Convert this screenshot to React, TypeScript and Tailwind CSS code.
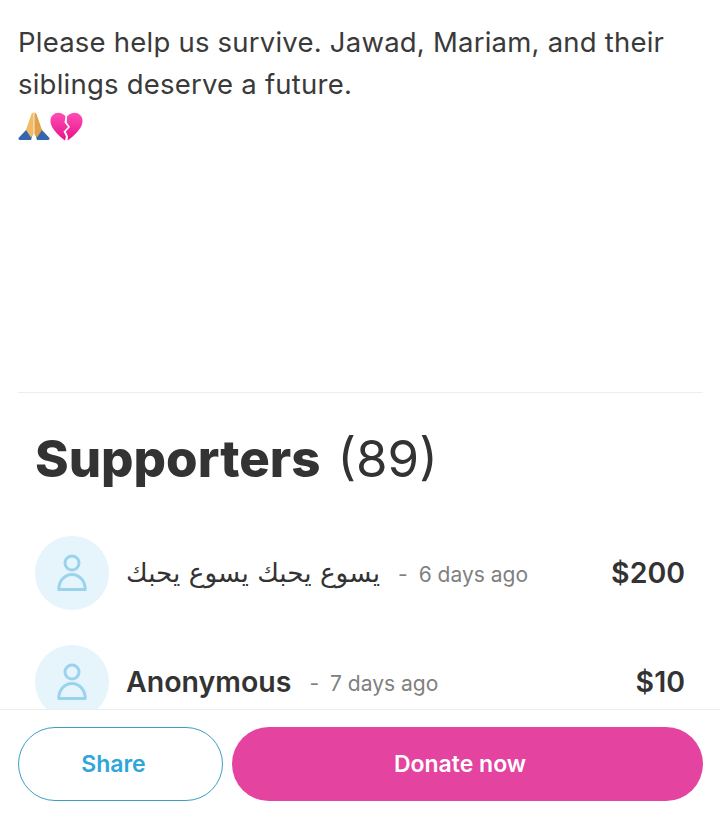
const Person = () => (
  <svg width="30" height="38" viewBox="0 0 30 38" fill="none" stroke="#9bd3ee" strokeWidth="3">
    <circle cx="15" cy="9" r="7" />
    <path d="M1.8 35.5 C1.8 27 7.5 20.5 15 20.5 C22.5 20.5 28.2 27 28.2 35.5 Z" strokeLinejoin="round" />
  </svg>
);

const Pray = () => (
  <svg width="32" height="28" viewBox="0 0 32 28">
    <path d="M9 17 L0.5 26 Q0 28 2 28 L13 28 L14.5 23 Z" fill="#3566ad" />
    <path d="M23 17 L31.5 26 Q32 28 30 28 L19 28 L17.5 23 Z" fill="#3566ad" />
    <path d="M15.6 0.5 Q13.6 0.5 12.8 4 L8 18 L13 25.5 L15.6 22 Z" fill="#f1bb66" />
    <path d="M16.4 0.5 Q18.4 0.5 19.2 4 L24 18 L19 25.5 L16.4 22 Z" fill="#e2a04a" />
  </svg>
);

const Broken = () => (
  <svg width="33" height="29" viewBox="0 0 33 29">
    <defs>
      <linearGradient id="heart" x1="0" y1="0" x2="0" y2="1">
        <stop offset="0" stopColor="#ff4fb4" />
        <stop offset="1" stopColor="#e8118c" />
      </linearGradient>
    </defs>
    <path d="M15.5 4.5 C13 0.8 8.5 0 5.5 1.2 C1.5 3 0 6.5 0.6 10.5 C1.5 17 9 24 15 28.5 L16 24.5 L13.5 19.5 L18 15 L14.5 10.5 Z" fill="url(#heart)" />
    <path d="M17 4.5 C20 0.8 24.5 0 27.5 1.2 C31.5 3 33 6.5 32.4 10.5 C31.5 17 24 24 17.5 28.5 L18 24.5 L15.8 19.5 L20 15 L16.8 10.5 Z" fill="url(#heart)" />
  </svg>
);

const Row = ({ name, time, amount, arabic }: { name: string; time: string; amount: string; arabic?: boolean }) => (
  <div className="flex items-center h-[74px]">
    <div className="w-[74px] h-[74px] shrink-0 rounded-full bg-[#e6f4fb] flex items-center justify-center">
      <Person />
    </div>
    <div className="ml-[17px] flex-1 flex items-center min-w-0">
      {arabic ? (
        <span dir="rtl" className="text-[26.3px] text-[#333333] font-normal leading-none font-['DejaVu_Sans',sans-serif]">{name}</span>
      ) : (
        <span className="text-[28.5px] text-[#333333] font-semibold leading-none">{name}</span>
      )}
      <span className="ml-[18px] pt-[4px] text-[21px] text-[#808080]">-</span>
      <span className="ml-[11px] pt-[4px] text-[21px] text-[#808080]">{time}</span>
    </div>
    <div className="text-[28.5px] font-semibold text-[#333333]">{amount}</div>
  </div>
);

export default function App() {
  return (
    <div className="w-[720px] h-[817px] flex flex-col bg-white overflow-hidden font-['Inter',sans-serif]">
      <div className="flex-1 min-h-0 overflow-hidden">
        <div className="ml-[18px] mr-[17px] pt-[21px] h-[393px] border-b border-[#eeeeee]">
          <p className="text-[27.5px] leading-[42px] text-[#3a3a3a] tracking-[0.22px]">
            Please help us survive. Jawad, Mariam, and their
            <br />
            siblings deserve a future.
          </p>
          <div className="flex mt-[7px]">
            <Pray />
            <Broken />
          </div>
        </div>
        <div className="px-[35px] pt-[35px]">
          <h2 className="text-[51px] leading-[62px] text-[#333333]">
            <span className="font-extrabold">Supporters</span>
            <span className="font-normal ml-[17px]">(89)</span>
          </h2>
          <div className="mt-[46px] flex flex-col gap-[35px]">
            <Row name="يسوع يحبك يسوع يحبك" time="6 days ago" amount="$200" arabic />
            <Row name="Anonymous" time="7 days ago" amount="$10" />
          </div>
        </div>
      </div>
      <div className="h-[108px] shrink-0 border-t border-[#eeeeee] bg-white pl-[18px] pr-[17px] pt-[17px] flex gap-[9px]">
        <button className="w-[205px] h-[74px] pr-[14px] rounded-full border border-[#3b9fc4] bg-white text-[23px] font-semibold text-[#2ea6d9]">Share</button>
        <button className="flex-1 h-[74px] pr-[15px] rounded-full bg-[#e4439f] text-[23px] font-semibold text-white">Donate now</button>
      </div>
    </div>
  );
}
